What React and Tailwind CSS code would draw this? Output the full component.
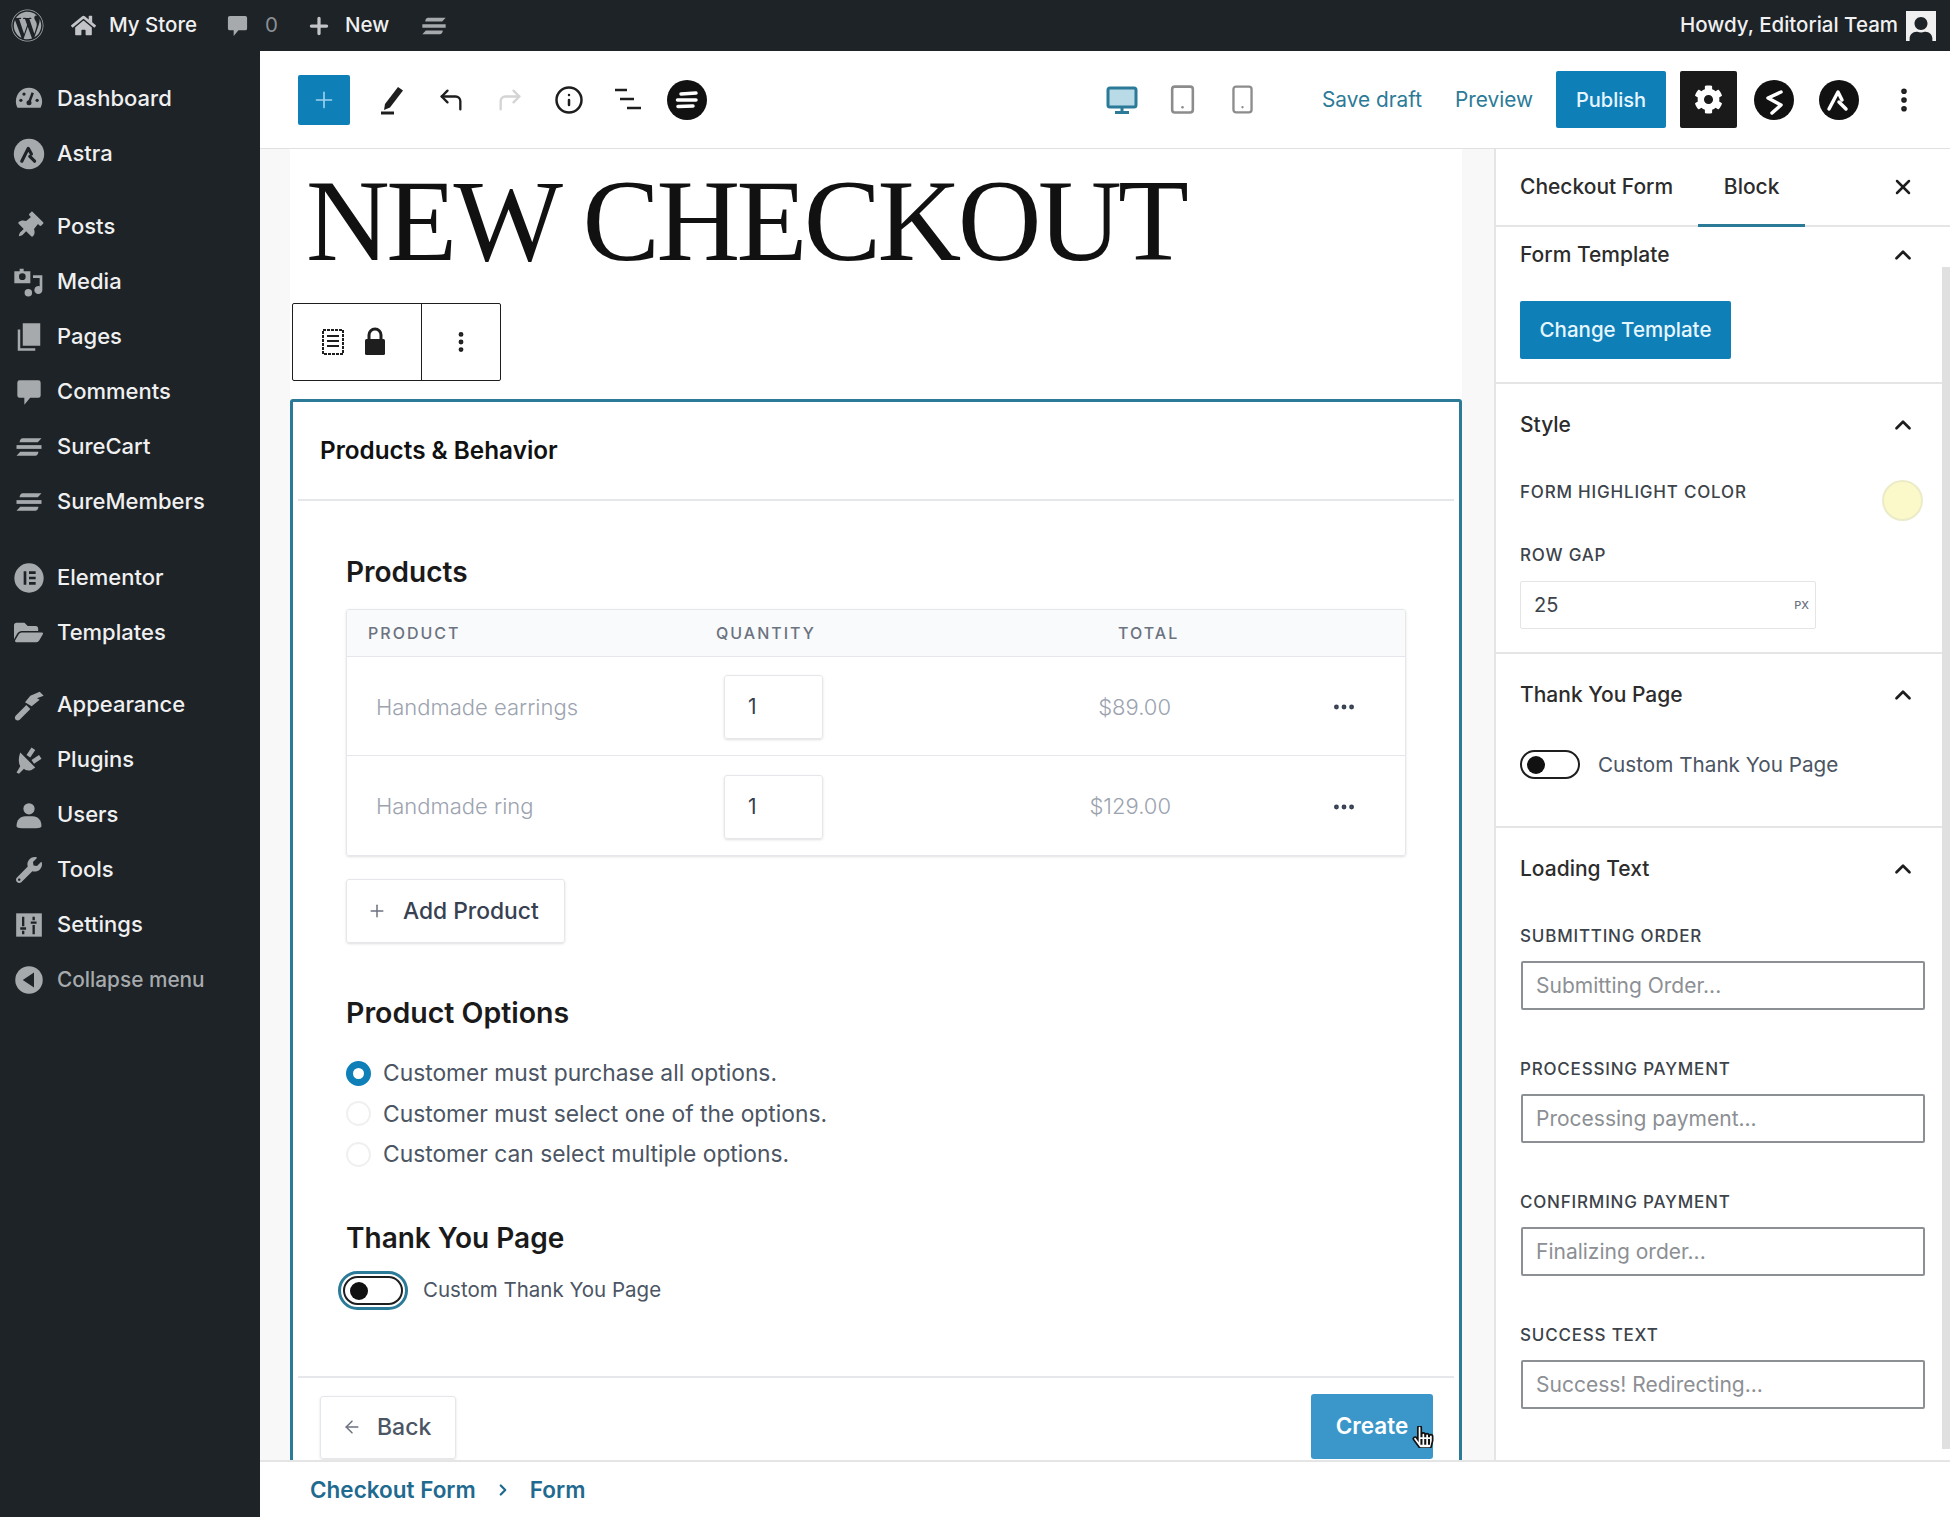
import React from 'react';
import { CornerUpLeft, CornerUpRight, Info, Tablet, Smartphone, ChevronUp, X, Plus, MoreVertical, MoreHorizontal, ArrowLeft, ChevronRight } from 'lucide-react';
import { FaWordpress, FaHome, FaThumbtack, FaWrench, FaFolderOpen, FaCog, FaUser, FaHandPointer } from 'react-icons/fa';

const MENU_ICON = '#a7aaad';
const MENU_BG = '#1d2327';

const SureBars = ({ size = 24, color = 'currentColor' }) => (
  <svg width={size} height={size} viewBox="0 0 24 24" fill={color}>
    <path d="M7 5h15l-3 3.200H4.500C4.500 6.500 5.500 5 7 5z" />
    <path d="M2 10.500h20v3H2z" />
    <path d="M19.500 15.800C19.500 17.500 18.500 19 17 19H2l3-3.200z" />
  </svg>
);

const CircleLogo = ({ size = 40, kind }) => (
  <svg width={size} height={size} viewBox="0 0 40 40">
    <circle cx="20" cy="20" r="20" fill="#111" />
    <g fill="none" stroke="#fff" strokeWidth="3.500" strokeLinecap="round" strokeLinejoin="round">
      {kind === 'sure' && (
        <>
          <path d="M14 14 L29 13" />
          <path d="M10.500 20 H29" />
          <path d="M11 26.500 L26 26" />
        </>
      )}
      {kind === 'spectra' && <path d="M27 12 L14 18 L27 25 L18 33" />}
      {kind === 'astra' && (
        <>
          <path d="M10 29 L19 12 L23 20" />
          <path d="M20 22 L27 29" />
        </>
      )}
    </g>
  </svg>
);

const CommentIcon = ({ size = 26 }) => (
  <svg width={size} height={size} viewBox="0 0 24 24" fill={MENU_ICON}>
    <path d="M4 2h16a2 2 0 0 1 2 2v11a2 2 0 0 1-2 2h-7l-5 6v-6H4a2 2 0 0 1-2-2V4a2 2 0 0 1 2-2z" />
  </svg>
);

const DashGauge = () => (
  <svg width="30" height="30" viewBox="0 0 24 24" fill={MENU_ICON}>
    <path d="M12 3C6 3 1.500 8 1.500 14c0 2 .5 3.500 1.300 5h18.400c.8-1.500 1.300-3 1.300-5C22.500 8 18 3 12 3z" />
    <path d="M12 15l3-8" stroke={MENU_BG} strokeWidth="2" />
    <circle cx="12" cy="15" r="2" fill={MENU_BG} />
    <circle cx="5.500" cy="13" r="1.300" fill={MENU_BG} />
    <circle cx="8" cy="8" r="1.300" fill={MENU_BG} />
    <circle cx="18.500" cy="13" r="1.300" fill={MENU_BG} />
  </svg>
);

const AstraMenu = () => (
  <svg width="32" height="32" viewBox="0 0 40 40">
    <circle cx="20" cy="20" r="19" fill={MENU_ICON} />
    <g fill="none" stroke={MENU_BG} strokeWidth="4" strokeLinecap="round" strokeLinejoin="round">
      <path d="M11 29 L19 13 L23 20" />
      <path d="M21 23 L27 29" />
    </g>
  </svg>
);

const MediaIcon = () => (
  <svg width="32" height="32" viewBox="0 0 24 24" fill={MENU_ICON}>
    <path d="M5 2h3v2h5v9H1V4h4z" />
    <circle cx="7" cy="8" r="2.500" fill={MENU_BG} />
    <path d="M15 7h7v11a3 3 0 1 1-2-2.800V9h-5z" />
    <circle cx="11.500" cy="20" r="2.800" />
  </svg>
);

const PagesIcon = () => (
  <svg width="30" height="30" viewBox="0 0 24 24" fill={MENU_ICON}>
    <path d="M3 6h2v15h12v2H3z" />
    <path d="M7 1h14v18H7z" />
  </svg>
);

const ElementorIcon = () => (
  <svg width="32" height="32" viewBox="0 0 24 24">
    <circle cx="12" cy="12" r="11" fill={MENU_ICON} />
    <path d="M8 7h2v10H8zM12 7h5v2h-5zM12 11h5v2h-5zM12 15h5v2h-5z" fill={MENU_BG} />
  </svg>
);

const BrushIcon = () => (
  <svg width="32" height="32" viewBox="0 0 24 24" fill={MENU_ICON}>
    <path d="M2 20l8-8 3 3-8 8c-1 .8-2 .8-3 0-.8-.8-.8-2 0-3z" />
    <path d="M9 10l4-5 7-3 3 3-5 2 2 1-6 5z" />
  </svg>
);

const PluginIcon = () => (
  <svg width="30" height="30" viewBox="0 0 24 24" fill={MENU_ICON}>
    <path d="M5 6l12 12-3 2c-3 1-5 0-6-1l-4 4-2-1 3-5c-1-2-2-5 0-11z" />
    <path d="M10 8l4-6 3 2-4 6zM14 12l6-4 2 3-6 4z" />
  </svg>
);

const UsersIcon = () => (
  <svg width="30" height="30" viewBox="0 0 24 24" fill={MENU_ICON}>
    <circle cx="12" cy="7" r="4.500" />
    <path d="M2 21c0-5 3-8 7-8h6c4 0 7 3 7 8 0 1-2 1.500-4 1.500H6c-2 0-4-.5-4-1.500z" />
  </svg>
);

const SettingsIcon = () => (
  <svg width="28" height="28" viewBox="0 0 24 24">
    <path d="M1 2h22v20H1z" fill={MENU_ICON} />
    <path d="M7 5v8M4.500 15h5M7 17v3M16 5v3M13.500 10h5M16 12v8" stroke={MENU_BG} strokeWidth="2" />
  </svg>
);

const CollapseIcon = () => (
  <svg width="30" height="30" viewBox="0 0 24 24">
    <circle cx="12" cy="12" r="11" fill={MENU_ICON} />
    <path d="M16 6v12L7 12z" fill={MENU_BG} />
  </svg>
);

const menuGroups = [
  { gap: 'mt-0', items: [['Dashboard', <DashGauge />], ['Astra', <AstraMenu />]] },
  {
    gap: 'mt-[18px]',
    items: [
      ['Posts', <FaThumbtack size={27} color={MENU_ICON} className="rotate-45" />],
      ['Media', <MediaIcon />],
      ['Pages', <PagesIcon />],
      ['Comments', <CommentIcon size={28} />],
      ['SureCart', <SureBars size={30} color={MENU_ICON} />],
      ['SureMembers', <SureBars size={30} color={MENU_ICON} />],
    ],
  },
  { gap: 'mt-[21px]', items: [['Elementor', <ElementorIcon />], ['Templates', <FaFolderOpen size={29} color={MENU_ICON} />]] },
  {
    gap: 'mt-[17px]',
    items: [
      ['Appearance', <BrushIcon />],
      ['Plugins', <PluginIcon />],
      ['Users', <UsersIcon />],
      ['Tools', <FaWrench size={26} color={MENU_ICON} />],
      ['Settings', <SettingsIcon />],
      ['Collapse menu', <CollapseIcon />],
    ],
  },
];

const TopBar = () => (
  <div className="flex h-[51px] shrink-0 items-center bg-[#1d2327] text-[20.500px] font-medium text-[#f0f0f1]">
    <div className="ml-[10px] flex w-[34px] justify-center"><FaWordpress size={33} color={MENU_ICON} /></div>
    <div className="ml-[24px] flex w-[30px] justify-center"><FaHome size={25} color="#c3c4c7" /></div>
    <span className="ml-[11px]">My Store</span>
    <div className="ml-[29px]"><CommentIcon size={23} /></div>
    <span className="ml-[16px] font-normal text-[#8c8f94]">0</span>
    <Plus size={26} strokeWidth={3} color="#c3c4c7" className="ml-[28px]" />
    <span className="ml-[13px]">New</span>
    <div className="ml-[31px]"><SureBars size={28} color={MENU_ICON} /></div>
    <div className="flex-1" />
    <span>Howdy, Editorial Team</span>
    <div className="ml-[8px] mr-[14px] flex h-[30px] w-[30px] items-end justify-center overflow-hidden bg-[#f0f0f1]">
      <FaUser size={26} color="#1d2327" className="-mb-[2px]" />
    </div>
  </div>
);

const Sidebar = () => (
  <div className="w-[260px] shrink-0 bg-[#1d2327] pt-[20px] text-[22px] font-medium text-[#f0f0f1]">
    {menuGroups.map((group, i) => (
      <div key={i} className={group.gap}>
        {group.items.map(([label, icon]) => (
          <div key={label} className="flex h-[55px] items-center">
            <div className="flex w-[57px] justify-center">{icon}</div>
            <span className={label === 'Collapse menu' ? 'text-[20.800px] text-[#a7aaad]' : ''}>{label}</span>
          </div>
        ))}
      </div>
    ))}
  </div>
);

const ToolBox = ({ children, w = 'w-[59px]' }) => (
  <div className={`flex items-center justify-center ${w}`}>{children}</div>
);

const ListViewIcon = () => (
  <svg width="32" height="32" viewBox="0 0 32 32" stroke="#1e1e1e" strokeWidth="2.500">
    <path d="M3 6h12M8 15h14M15 24h14" />
  </svg>
);

const PenIcon = () => (
  <svg width="34" height="34" viewBox="0 0 34 34">
    <path d="M10 21 L23 4 l5 3.500 -13 17 -6 2.500z" fill="#1e1e1e" />
    <path d="M6 30h13" stroke="#1e1e1e" strokeWidth="3" />
  </svg>
);

const MonitorIcon = () => (
  <svg width="32" height="32" viewBox="0 0 32 32">
    <rect x="2" y="4" width="28" height="19" rx="2" fill="#b9dbe8" stroke="#2b7a97" strokeWidth="3" />
    <path d="M16 23v4M9 28.500h14" stroke="#2b7a97" strokeWidth="3" />
  </svg>
);

const LockIcon = () => (
  <svg width="24" height="30" viewBox="0 0 24 30">
    <path d="M6 13V8a6 6 0 0 1 12 0v5" fill="none" stroke="#1e1e1e" strokeWidth="3" />
    <rect x="2" y="12" width="20" height="16" rx="1.500" fill="#1e1e1e" />
  </svg>
);

const EditorBar = () => (
  <div className="flex h-[98px] shrink-0 items-center border-b border-[#e0e0e0] bg-white pl-[38px]">
    <button className="flex h-[50px] w-[52px] items-center justify-center rounded-[2px] bg-[#0f7fb8]">
      <Plus size={26} strokeWidth={1.5} color="#9fd3ee" />
    </button>
    <div className="ml-[12px] flex">
      <ToolBox><PenIcon /></ToolBox>
      <ToolBox><CornerUpLeft size={28} strokeWidth={2} color="#1e1e1e" /></ToolBox>
      <ToolBox><CornerUpRight size={28} strokeWidth={2} color="#d4d4d4" /></ToolBox>
      <ToolBox><Info size={30} strokeWidth={2} color="#1e1e1e" /></ToolBox>
      <ToolBox><ListViewIcon /></ToolBox>
      <ToolBox><CircleLogo kind="sure" /></ToolBox>
    </div>
    <div className="flex-1" />
    <ToolBox w="w-[60px]"><MonitorIcon /></ToolBox>
    <ToolBox w="w-[60px]"><Tablet size={31} strokeWidth={2} color="#8c8c8c" /></ToolBox>
    <ToolBox w="w-[60px]"><Smartphone size={31} strokeWidth={1.8} color="#8c8c8c" /></ToolBox>
    <span className="ml-[50px] text-[20.800px] text-[#2b7a97]">Save draft</span>
    <span className="ml-[33px] text-[20.800px] text-[#2b7a97]">Preview</span>
    <button className="ml-[23px] h-[57px] w-[110px] rounded-[2px] bg-[#0f7fb8] text-[20px] font-medium text-[#e6f6ff]">Publish</button>
    <div className="ml-[14px] flex h-[57px] w-[57px] items-center justify-center rounded-[2px] bg-[#1a1a1a]">
      <FaCog size={29} color="#fff" />
    </div>
    <div className="ml-[4px] flex">
      <ToolBox w="w-[65px]"><CircleLogo kind="spectra" /></ToolBox>
      <ToolBox w="w-[65px]"><CircleLogo kind="astra" /></ToolBox>
      <ToolBox w="w-[65px]"><MoreVertical size={30} strokeWidth={2.500} color="#1e1e1e" /></ToolBox>
    </div>
    <div className="w-[14px]" />
  </div>
);

const Toggle = ({ focus }) => (
  <div className={focus ? 'rounded-full border-[3px] border-[#2b7a97] p-[2px]' : ''}>
    <div className="flex h-[29px] w-[60px] items-center rounded-full border-2 border-[#1e1e1e] bg-white pl-[5px]">
      <div className="h-[18px] w-[18px] rounded-full bg-[#111]" />
    </div>
  </div>
);

const products = [
  { name: 'Handmade earrings', price: '$89.00' },
  { name: 'Handmade ring', price: '$129.00' },
];

const options = [
  'Customer must purchase all options.',
  'Customer must select one of the options.',
  'Customer can select multiple options.',
];

const FormCard = () => (
  <div className="mt-[18px] rounded-t-[3px] border-[3px] border-[#2b7a97] bg-white">
    <div className="mx-[5px] flex h-[99px] items-center border-b-2 border-[#e5e7eb] pl-[22px] text-[24.300px] font-semibold text-[#111]">
      Products &amp; Behavior
    </div>
    <div className="px-[53px] pt-[53px]">
      <h2 className="h-[36px] text-[28px] font-semibold leading-[36px] text-[#1a1a1a]">Products</h2>
      <div className="mt-[19px] overflow-hidden rounded-[3px] border border-[#e5e7eb] shadow-sm">
        <div className="flex h-[47px] items-center border-b border-[#e5e7eb] bg-[#f9fafb] text-[16px] font-medium tracking-[2px] text-[#6b7280]">
          <span className="ml-[21px] w-[348px]">PRODUCT</span>
          <span className="w-[402px]">QUANTITY</span>
          <span>TOTAL</span>
        </div>
        {products.map((p, i) => (
          <div key={p.name} className={`flex h-[99px] items-center pt-[2px] ${i === 0 ? 'border-b border-[#e5e7eb]' : ''}`}>
            <span className="ml-[29px] w-[348px] text-[22px] font-light text-[#9ca3af]">{p.name}</span>
            <div className="flex h-[64px] w-[99px] items-center rounded-[3px] border border-[#e5e7eb] pl-[23px] text-[21px] text-[#374151] shadow-sm">1</div>
            <span className="w-[348px] text-right text-[22px] font-light text-[#9ca3af]">{p.price}</span>
            <MoreHorizontal size={26} strokeWidth={2.500} color="#374151" className="ml-[160px]" />
          </div>
        ))}
      </div>
      <button className="mt-[23px] flex h-[64px] w-[219px] items-center rounded-[3px] border border-[#e5e7eb] pl-[20px] text-[22.800px] font-medium text-[#374151] shadow-sm">
        <Plus size={20} strokeWidth={1.800} color="#6b7280" />
        <span className="ml-[16px]">Add Product</span>
      </button>

      <h2 className="mt-[52px] h-[36px] text-[28.500px] font-semibold leading-[36px] text-[#1a1a1a]">Product Options</h2>
      <div className="mt-[22px]">
        {options.map((o, i) => (
          <div key={o} className="flex h-[40.500px] items-center">
            <div className={i === 0 ? 'h-[25px] w-[25px] rounded-full border-[7px] border-[#0f7fb8] bg-white' : 'h-[25px] w-[25px] rounded-full border-2 border-[#f0f0f0] bg-white'} />
            <span className="ml-[12px] text-[22.800px] text-[#4b5563]">{o}</span>
          </div>
        ))}
      </div>

      <h2 className="mt-[45px] h-[36px] text-[28px] font-semibold leading-[36px] text-[#1a1a1a]">Thank You Page</h2>
      <div className="mt-[13px] -ml-[8px] flex h-[44px] items-center">
        <Toggle focus />
        <span className="ml-[15px] text-[20.500px] text-[#4b5563]">Custom Thank You Page</span>
      </div>
    </div>
    <div className="mx-[5px] mt-[63px] flex items-start justify-between border-t-2 border-[#e5e7eb] pl-[22px] pr-[21px] pt-[16px] pb-[40px]">
      <button className="mt-[2px] flex h-[63px] w-[136px] items-center rounded-[3px] border border-[#e5e7eb] pl-[21px] text-[23px] font-medium text-[#4b5563] shadow-sm">
        <ArrowLeft size={20} strokeWidth={1.800} color="#6b7280" />
        <span className="ml-[15px]">Back</span>
      </button>
      <div className="relative">
        <button className="h-[65px] w-[122px] rounded-[3px] bg-[#3b97c9] text-[22.500px] font-semibold text-white">Create</button>
        <FaHandPointer size={22} color="#fff" stroke="#111" strokeWidth={40} className="absolute right-[-1px] top-[32px]" />
      </div>
    </div>
  </div>
);

const Canvas = () => (
  <div className="min-w-0 flex-1 overflow-hidden bg-[#f8f8f8] pl-[30px] pr-[32px]">
    <div className="h-[154px] bg-white pb-[10px] pl-[16px]">
      <h1 className="flex h-full items-center whitespace-nowrap font-['Liberation_Serif',serif] text-[116px] leading-none tracking-[-3.600px] text-[#111]">NEW CHECKOUT</h1>
    </div>
    <div className="bg-white">
      <div className="ml-[2px] flex h-[78px] w-[209px] items-center rounded-[2px] border-[1.500px] border-[#1e1e1e] bg-white">
        <div className="flex h-full w-[129px] items-center border-r-[1.500px] border-[#1e1e1e] pl-[27px]">
          <svg width="26" height="28" viewBox="0 0 26 28" fill="none" stroke="#1e1e1e" strokeWidth="2">
            <path d="M3 2h20v24H3z" strokeDasharray="3 1" />
            <path d="M7 8h12M7 13h12M7 18h12" />
          </svg>
          <div className="ml-[17px] flex"><LockIcon /></div>
        </div>
        <div className="flex flex-1 justify-center"><MoreVertical size={26} strokeWidth={2.500} color="#1e1e1e" /></div>
      </div>
      <FormCard />
    </div>
  </div>
);

const PanelHeader = ({ title }) => (
  <div className="flex h-[36px] items-center justify-between text-[21px] font-medium text-[#2c2c2c]">
    {title}
    <ChevronUp size={26} strokeWidth={2.500} color="#1e1e1e" className="mr-[10px]" />
  </div>
);

const PanelSection = ({ title, first, className, children }) => (
  <div className={`border-b-2 border-[#e5e5e5] px-[24px] ${first ? 'pt-[10px]' : 'pt-[23px]'} ${className}`}>
    <PanelHeader title={title} />
    {children}
  </div>
);

const FieldLabel = ({ className = '', children }) => (
  <div className={`h-[20px] text-[17px] font-medium leading-[20px] tracking-[0.800px] text-[#3c434a] ${className}`}>{children}</div>
);

const loadingFields = [
  ['SUBMITTING ORDER', 'Submitting Order...'],
  ['PROCESSING PAYMENT', 'Processing payment...'],
  ['CONFIRMING PAYMENT', 'Finalizing order...'],
  ['SUCCESS TEXT', 'Success! Redirecting...'],
];

const RightPanel = () => (
  <div className="relative w-[456px] shrink-0 overflow-hidden border-l-2 border-[#e5e5e5] bg-white">
    <div className="flex h-[78px] items-center border-b-2 border-[#e5e5e5] pl-[24px] text-[21px] font-medium text-[#2c2c2c]">
      <span>Checkout Form</span>
      <div className="-mb-[2px] ml-[25px] flex w-[107px] items-center justify-center self-stretch border-b-[3px] border-[#2b7a97]">Block</div>
      <X size={24} strokeWidth={2.500} color="#1e1e1e" className="ml-auto mr-[35px]" />
    </div>
    <PanelSection title="Form Template" first className="h-[157px]">
      <button className="mt-[28px] h-[58px] w-[211px] rounded-[2px] bg-[#0f7fb8] text-[20.500px] font-medium text-[#e6f6ff]">Change Template</button>
    </PanelSection>
    <PanelSection title="Style" className="h-[270px]">
      <div className="mt-[37px] flex items-start justify-between">
        <FieldLabel className="mt-[2px]">FORM HIGHLIGHT COLOR</FieldLabel>
        <div className="mr-[3px] h-[41px] w-[41px] rounded-full border-2 border-[#ecebc8] bg-[#fbf9c9]" />
      </div>
      <FieldLabel className="mt-[24px]">ROW GAP</FieldLabel>
      <div className="mt-[16px] flex h-[48px] w-[296px] items-center justify-between rounded-[2px] border border-[#e5e5e5] pl-[13px] pr-[6px] text-[20px] text-[#3c434a]">
        25
        <span className="text-[11px] font-medium text-[#6b7280]">PX</span>
      </div>
    </PanelSection>
    <PanelSection title="Thank You Page" className="h-[174px]">
      <div className="mt-[36px] flex items-center">
        <Toggle />
        <span className="ml-[18px] text-[20.700px] text-[#4b5563]">Custom Thank You Page</span>
      </div>
    </PanelSection>
    <div className="px-[24px] pt-[23px]">
      <PanelHeader title="Loading Text" />
      <div className="pt-[39px]">
        {loadingFields.map(([label, placeholder], i) => (
          <div key={label} className={i > 0 ? 'mt-[49px]' : ''}>
            <FieldLabel>{label}</FieldLabel>
            <div className="ml-[1px] mt-[15px] flex h-[49px] w-[404px] items-center rounded-[2px] border-2 border-[#8c8f94] pl-[13px] text-[21px] text-[#8c8f94]">{placeholder}</div>
          </div>
        ))}
      </div>
    </div>
    <div className="absolute right-0 top-[118px] h-[1182px] w-[8px] bg-[#e0e0e0]" />
  </div>
);

export default function App() {
  return (
    <div className="flex h-[1517px] w-[1950px] flex-col overflow-hidden bg-white font-['Inter',sans-serif]">
      <TopBar />
      <div className="flex min-h-0 flex-1">
        <Sidebar />
        <div className="flex min-w-0 flex-1 flex-col">
          <EditorBar />
          <div className="flex min-h-0 flex-1">
            <Canvas />
            <RightPanel />
          </div>
          <div className="flex h-[57px] shrink-0 items-center border-t-2 border-[#e5e5e5] bg-white pl-[50px] text-[22.500px] font-semibold text-[#1f6a8f]">
            Checkout Form
            <ChevronRight size={18} strokeWidth={3} className="mx-[18px]" />
            Form
          </div>
        </div>
      </div>
    </div>
  );
}
